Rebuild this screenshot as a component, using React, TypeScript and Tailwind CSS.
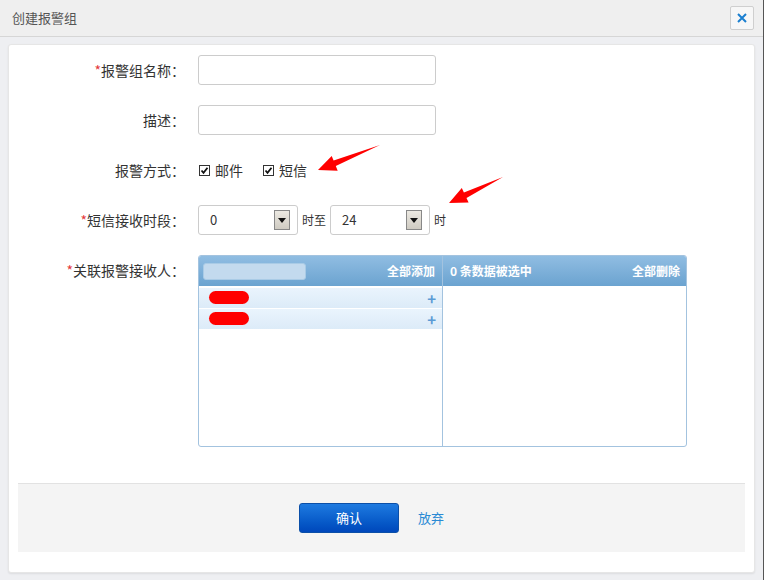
import React from 'react';

const font = { fontFamily: '"Noto Sans CJK SC", "Liberation Sans", sans-serif' };

const Label = ({ text, required }: { text: string; required?: boolean }) => (
  <div className="w-[176px] shrink-0 text-right text-[14px] text-[#333] leading-[30px]">
    {required && <span className="text-[#e4393c]">*</span>}
    {text}：
  </div>
);

const Check = ({ label }: { label: string }) => (
  <label className="flex items-center gap-[5px] text-[14px] text-[#333]">
    <span className="flex h-[11px] w-[11px] items-center justify-center border border-[#333] bg-white">
      <svg width="9" height="9" viewBox="0 0 9 9">
        <path d="M1.5 4.5 L3.5 6.8 L7.5 1.8" fill="none" stroke="#111" strokeWidth="1.8" />
      </svg>
    </span>
    {label}
  </label>
);

const Select = ({ value }: { value: string }) => (
  <div className="flex h-[30px] w-[100px] items-center justify-between rounded-[3px] border border-[#ccc] bg-white pl-[11px] pr-[7px]">
    <span className="text-[13px] text-[#333]">{value}</span>
    <span className="flex h-[20px] w-[16px] items-center justify-center border border-[#888] bg-gradient-to-b from-[#ece9e2] to-[#cfcbc2]">
      <svg width="8" height="5" viewBox="0 0 8 5">
        <path d="M0 0 H8 L4 5 Z" fill="#111" />
      </svg>
    </span>
  </div>
);

const Arrow = ({ points }: { points: string }) => (
  <svg className="pointer-events-none absolute left-0 top-0" width="765" height="580">
    <polygon points={points} fill="#ff0000" />
  </svg>
);

const Row = () => (
  <div className="flex h-[21px] items-center justify-between border-b border-white bg-gradient-to-b from-[#eaf4fd] to-[#dcebf8] pl-[12px] pr-[6px]">
    <span className="relative text-[12px] text-[#1f5f9f]">
      <span className="invisible">张三丰</span>
      <span className="absolute left-[-2px] top-[2px] h-[13px] w-[40px] rounded-full bg-[#ff0000]" />
    </span>
    <span className="text-[15px] font-bold leading-none text-[#5b9bd5]">+</span>
  </div>
);

export default function App() {
  return (
    <div className="relative h-[580px] w-[765px] overflow-hidden bg-white" style={font}>
      <div className="flex h-full w-[764px] flex-col border-r border-[#555] bg-[#eeeff2]">
        <div className="flex h-[37px] shrink-0 items-center justify-between border-b border-[#d6d6d6] bg-[#efefef] pl-[12px] pr-[9px]">
          <span className="text-[13px] text-[#555]">创建报警组</span>
          <button className="flex h-[24px] w-[24px] items-center justify-center rounded-[2px] border border-[#cfcfcf] bg-[#f7f7f7]">
            <svg width="10" height="10" viewBox="0 0 10 10">
              <path d="M1 1 L9 9 M9 1 L1 9" stroke="#1a7fd0" strokeWidth="2" />
            </svg>
          </button>
        </div>

        <div className="mx-[8px] mt-[7px] flex flex-col rounded-[3px] border border-[#e6e6e6] bg-white pb-[20px] pt-[10px] shadow-[0_1px_2px_rgba(0,0,0,0.08)]">
          <div className="flex flex-col gap-[20px]">
            <div className="flex gap-[13px]">
              <Label text="报警组名称" required />
              <div className="h-[30px] w-[238px] rounded-[3px] border border-[#ccc]" />
            </div>
            <div className="flex gap-[13px]">
              <Label text="描述" />
              <div className="h-[30px] w-[238px] rounded-[3px] border border-[#ccc]" />
            </div>
            <div className="flex gap-[13px]">
              <Label text="报警方式" />
              <div className="flex items-center gap-[20px] pl-[1px] pt-[1px]">
                <Check label="邮件" />
                <Check label="短信" />
              </div>
            </div>
            <div className="flex gap-[13px]">
              <Label text="短信接收时段" required />
              <div className="flex items-center gap-[4px] text-[12px] text-[#333]">
                <Select value="0" />
                <span>时至</span>
                <Select value="24" />
                <span>时</span>
              </div>
            </div>
            <div className="flex gap-[13px]">
              <Label text="关联报警接收人" required />
              <div className="flex h-[192px] w-[489px] overflow-hidden rounded-[3px] border border-[#a3c3df]">
                <div className="flex w-[244px] flex-col border-r border-[#a3c3df]">
                  <div className="flex h-[30px] items-center justify-between bg-gradient-to-b from-[#90bde2] to-[#6ba3d0] pl-[4px] pr-[7px]">
                    <span className="h-[17px] w-[103px] rounded-[3px] border border-[#a9cbe6] bg-[#c3daee]" />
                    <span className="text-[12px] font-bold text-white">全部添加</span>
                  </div>
                  <div className="pt-[2px]">
                    <Row />
                    <Row />
                  </div>
                </div>
                <div className="flex flex-1 flex-col">
                  <div className="flex h-[30px] items-center justify-between bg-gradient-to-b from-[#90bde2] to-[#6ba3d0] pl-[7px] pr-[6px] text-[12px] font-bold text-white">
                    <span>0 条数据被选中</span>
                    <span>全部删除</span>
                  </div>
                </div>
              </div>
            </div>
          </div>

          <div className="mx-[9px] mt-[36px] flex h-[69px] items-center gap-[19px] border-t border-[#e2e2e2] bg-[#f4f4f4] pl-[281px]">
            <button className="h-[30px] w-[100px] rounded-[3px] border border-[#0b4fa8] bg-gradient-to-b from-[#1e7ae0] to-[#0047bb] text-[13px] text-white">
              确认
            </button>
            <span className="text-[13px] text-[#2a8ad4]">放弃</span>
          </div>
        </div>
      </div>

      <Arrow points="380,145 333.6,160.5 331.7,155.9 318,170 337.7,170.7 335.8,166.1" />
      <Arrow points="503,177 463.9,192.6 461.8,188.1 449,203 468.6,202.5 466.5,198" />
    </div>
  );
}
